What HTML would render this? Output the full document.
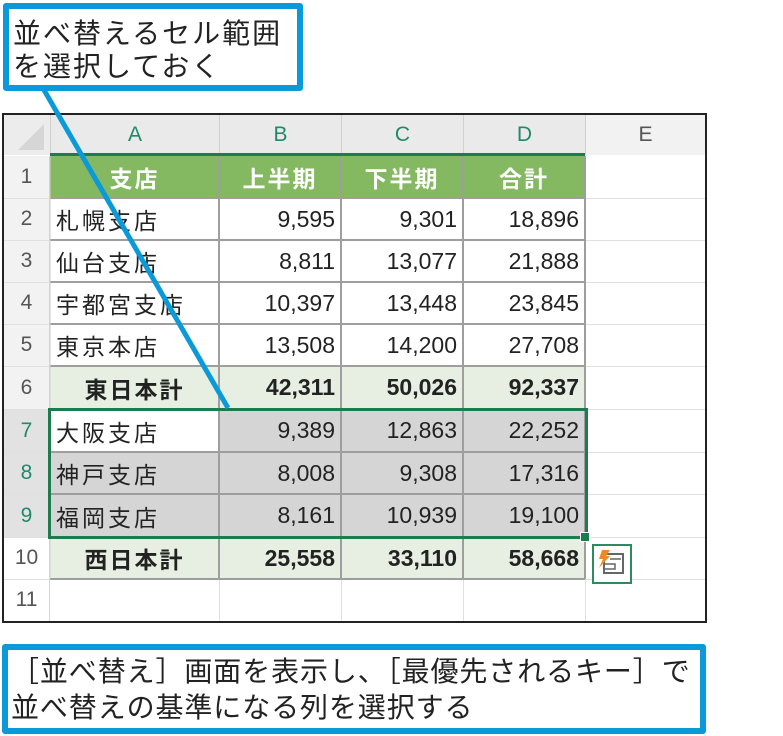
<!DOCTYPE html>
<html><head><meta charset="utf-8">
<style>
*{margin:0;padding:0;box-sizing:border-box}
body{width:783px;height:736px;background:#fff;position:relative;overflow:hidden;font-family:"Liberation Sans","Noto Sans CJK JP",sans-serif;color:#222}
.a{position:absolute}
.c{position:absolute;display:flex;align-items:center;font-size:23px;white-space:nowrap}
.r{justify-content:flex-end;padding-right:6px}
.l{padding-left:6px;letter-spacing:3px}
.m{justify-content:center;letter-spacing:2px}
.b{font-weight:bold}
.rh{position:absolute;left:3px;width:47px;display:flex;align-items:center;justify-content:center;font-size:21px;color:#555}
.ch{position:absolute;top:115px;height:40px;display:flex;align-items:center;justify-content:center;font-size:21px;color:#1f8a6a;background:#eaeaea}
.t{position:absolute;font-size:28px;letter-spacing:2px;color:#222;white-space:nowrap}
</style></head><body>

<div class="a" style="left:2px;top:113px;width:705px;height:510px;border:2px solid #222;background:#fff"></div>
<div class="a" style="left:4px;top:115px;width:701px;height:40px;background:#eeeeee"></div>
<div class="a" style="left:4px;top:115px;width:46px;height:40px;background:#ececec"></div>
<svg class="a" style="left:14px;top:122px" width="32" height="30"><polygon points="30,2 30,28 4,28" fill="#d6d6d6"/></svg>
<div class="ch" style="left:50px;width:169px;border-left:1px solid #d0d0d0">A</div>
<div class="ch" style="left:219px;width:122px;border-left:1px solid #d0d0d0">B</div>
<div class="ch" style="left:341px;width:122px;border-left:1px solid #d0d0d0">C</div>
<div class="ch" style="left:463px;width:122px;border-left:1px solid #d0d0d0">D</div>
<div class="ch" style="left:585px;width:120px;border-left:1px solid #d0d0d0;color:#555;background:#f2f2f2">E</div>
<div class="a" style="left:50px;top:153px;width:535px;height:3px;background:#1e7b4e"></div>

<div class="a" style="left:4px;top:156px;width:46px;height:253px;background:#f2f2f2"></div>
<div class="a" style="left:4px;top:409px;width:46px;height:128px;background:#e2e2e2"></div>
<div class="a" style="left:49px;top:156px;width:1px;height:465px;background:#d6d6d6"></div>

<div class="rh" style="top:156px;height:42px">1</div>
<div class="rh" style="top:198px;height:42px">2</div>
<div class="rh" style="top:240px;height:42px">3</div>
<div class="rh" style="top:282px;height:42px">4</div>
<div class="rh" style="top:324px;height:42px">5</div>
<div class="rh" style="top:366px;height:43px">6</div>
<div class="rh" style="top:409px;height:43px;color:#1f8a6a">7</div>
<div class="rh" style="top:452px;height:42px;color:#1f8a6a">8</div>
<div class="rh" style="top:494px;height:43px;color:#1f8a6a">9</div>
<div class="rh" style="top:537px;height:42px">10</div>
<div class="rh" style="top:579px;height:42px">11</div>

<svg class="a" style="left:0;top:0" width="783" height="736">
<g stroke="#e0e0e0" stroke-width="1">
<line x1="4" y1="198.5" x2="50" y2="198.5"/><line x1="4" y1="240.5" x2="50" y2="240.5"/><line x1="4" y1="282.5" x2="50" y2="282.5"/><line x1="4" y1="324.5" x2="50" y2="324.5"/><line x1="4" y1="366.5" x2="50" y2="366.5"/><line x1="4" y1="409.5" x2="50" y2="409.5"/><line x1="4" y1="452.5" x2="50" y2="452.5"/><line x1="4" y1="494.5" x2="50" y2="494.5"/><line x1="4" y1="537.5" x2="50" y2="537.5"/><line x1="4" y1="579.5" x2="50" y2="579.5"/>
<line x1="585" y1="198.5" x2="705" y2="198.5"/><line x1="585" y1="240.5" x2="705" y2="240.5"/><line x1="585" y1="282.5" x2="705" y2="282.5"/><line x1="585" y1="324.5" x2="705" y2="324.5"/><line x1="585" y1="366.5" x2="705" y2="366.5"/><line x1="585" y1="409.5" x2="705" y2="409.5"/><line x1="585" y1="452.5" x2="705" y2="452.5"/><line x1="585" y1="494.5" x2="705" y2="494.5"/><line x1="585" y1="537.5" x2="705" y2="537.5"/><line x1="585" y1="579.5" x2="705" y2="579.5"/>
<line x1="219.5" y1="579" x2="219.5" y2="621"/><line x1="341.5" y1="579" x2="341.5" y2="621"/><line x1="463.5" y1="579" x2="463.5" y2="621"/><line x1="585.5" y1="579" x2="585.5" y2="621"/>
</g>
</svg>

<div class="a" style="left:50px;top:156px;width:535px;height:42px;background:#84b962"></div>
<div class="a" style="left:50px;top:366px;width:535px;height:43px;background:#e6efe1"></div>
<div class="a" style="left:50px;top:537px;width:535px;height:42px;background:#e6efe1"></div>
<div class="a" style="left:50px;top:409px;width:535px;height:128px;background:#d5d5d5"></div>
<div class="a" style="left:50px;top:409px;width:169px;height:43px;background:#fff"></div>

<svg class="a" style="left:0;top:0" width="783" height="736">
<g stroke="#9e9e9e" stroke-width="2">
<line x1="219" y1="156" x2="219" y2="579"/><line x1="341" y1="156" x2="341" y2="579"/><line x1="463" y1="156" x2="463" y2="579"/><line x1="585" y1="156" x2="585" y2="579"/>
<line x1="50" y1="198" x2="585" y2="198"/><line x1="50" y1="240" x2="585" y2="240"/><line x1="50" y1="282" x2="585" y2="282"/><line x1="50" y1="324" x2="585" y2="324"/><line x1="50" y1="366" x2="585" y2="366"/><line x1="50" y1="409" x2="585" y2="409"/><line x1="50" y1="452" x2="585" y2="452"/><line x1="50" y1="494" x2="585" y2="494"/><line x1="50" y1="537" x2="585" y2="537"/><line x1="50" y1="579" x2="585" y2="579"/>
</g>
<line x1="50" y1="156" x2="50" y2="579" stroke="#cfcfcf" stroke-width="1"/>
</svg>

<div class="c m b" style="left:50px;top:156px;width:169px;height:42px;color:#fff">支店</div>
<div class="c m b" style="left:219px;top:156px;width:122px;height:42px;color:#fff">上半期</div>
<div class="c m b" style="left:341px;top:156px;width:122px;height:42px;color:#fff">下半期</div>
<div class="c m b" style="left:463px;top:156px;width:122px;height:42px;color:#fff">合計</div>

<div class="c l" style="left:50px;top:198px;width:169px;height:42px">札幌支店</div>
<div class="c r" style="left:219px;top:198px;width:122px;height:42px">9,595</div>
<div class="c r" style="left:341px;top:198px;width:122px;height:42px">9,301</div>
<div class="c r" style="left:463px;top:198px;width:122px;height:42px">18,896</div>

<div class="c l" style="left:50px;top:240px;width:169px;height:42px">仙台支店</div>
<div class="c r" style="left:219px;top:240px;width:122px;height:42px">8,811</div>
<div class="c r" style="left:341px;top:240px;width:122px;height:42px">13,077</div>
<div class="c r" style="left:463px;top:240px;width:122px;height:42px">21,888</div>

<div class="c l" style="left:50px;top:282px;width:169px;height:42px">宇都宮支店</div>
<div class="c r" style="left:219px;top:282px;width:122px;height:42px">10,397</div>
<div class="c r" style="left:341px;top:282px;width:122px;height:42px">13,448</div>
<div class="c r" style="left:463px;top:282px;width:122px;height:42px">23,845</div>

<div class="c l" style="left:50px;top:324px;width:169px;height:42px">東京本店</div>
<div class="c r" style="left:219px;top:324px;width:122px;height:42px">13,508</div>
<div class="c r" style="left:341px;top:324px;width:122px;height:42px">14,200</div>
<div class="c r" style="left:463px;top:324px;width:122px;height:42px">27,708</div>

<div class="c m b" style="left:50px;top:366px;width:169px;height:43px">東日本計</div>
<div class="c r b" style="left:219px;top:366px;width:122px;height:43px">42,311</div>
<div class="c r b" style="left:341px;top:366px;width:122px;height:43px">50,026</div>
<div class="c r b" style="left:463px;top:366px;width:122px;height:43px">92,337</div>

<div class="c l" style="left:50px;top:409px;width:169px;height:43px">大阪支店</div>
<div class="c r" style="left:219px;top:409px;width:122px;height:43px">9,389</div>
<div class="c r" style="left:341px;top:409px;width:122px;height:43px">12,863</div>
<div class="c r" style="left:463px;top:409px;width:122px;height:43px">22,252</div>

<div class="c l" style="left:50px;top:452px;width:169px;height:42px">神戸支店</div>
<div class="c r" style="left:219px;top:452px;width:122px;height:42px">8,008</div>
<div class="c r" style="left:341px;top:452px;width:122px;height:42px">9,308</div>
<div class="c r" style="left:463px;top:452px;width:122px;height:42px">17,316</div>

<div class="c l" style="left:50px;top:494px;width:169px;height:43px">福岡支店</div>
<div class="c r" style="left:219px;top:494px;width:122px;height:43px">8,161</div>
<div class="c r" style="left:341px;top:494px;width:122px;height:43px">10,939</div>
<div class="c r" style="left:463px;top:494px;width:122px;height:43px">19,100</div>

<div class="c m b" style="left:50px;top:537px;width:169px;height:42px">西日本計</div>
<div class="c r b" style="left:219px;top:537px;width:122px;height:42px">25,558</div>
<div class="c r b" style="left:341px;top:537px;width:122px;height:42px">33,110</div>
<div class="c r b" style="left:463px;top:537px;width:122px;height:42px">58,668</div>

<div class="a" style="left:48px;top:408px;width:540px;height:131px;border:3px solid #1e7b4e"></div>
<div class="a" style="left:581px;top:533px;width:8px;height:8px;background:#1e7b4e;outline:1px solid #fff"></div>

<div class="a" style="left:592px;top:544px;width:40px;height:40px;border:2px solid #2e8b5e;background:#fff"></div>
<svg class="a" style="left:594px;top:546px" width="36" height="36">
<rect x="10" y="8" width="19" height="19" fill="none" stroke="#666" stroke-width="2"/>
<line x1="16" y1="13" x2="27" y2="13" stroke="#666" stroke-width="1.5"/>
<rect x="10" y="18" width="11" height="5" fill="none" stroke="#666" stroke-width="1.5"/>
<polygon points="8,4 16,4 12,10 16,10 5,22 9,13 5,13" fill="#f08a1e"/>
</svg>

<div class="a" style="left:3px;top:3px;width:300px;height:88px;border:6px solid #0a9ad9;border-radius:3px;background:#fff"></div>
<div class="t" style="left:13px;top:17px;line-height:33px">並べ替えるセル範囲<br>を選択しておく</div>

<svg class="a" style="left:0;top:0" width="783" height="736">
<line x1="44" y1="90" x2="228" y2="408" stroke="#0a9ad9" stroke-width="5"/>
</svg>

<div class="a" style="left:2px;top:644px;width:704px;height:90px;border:6px solid #0a9ad9;border-radius:3px;background:#fff"></div>
<div class="t" style="left:11px;top:654px;line-height:36px;letter-spacing:0.9px">［並べ替え］画面を表示し、［最優先されるキー］で<br>並べ替えの基準になる列を選択する</div>

</body></html>
